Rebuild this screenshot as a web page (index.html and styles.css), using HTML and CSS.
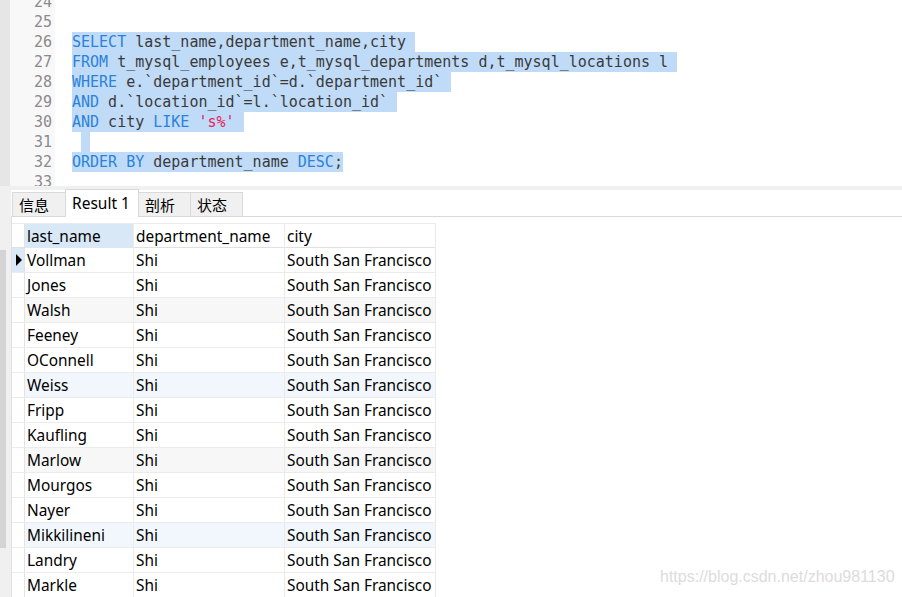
FILE: index.html
```html
<!DOCTYPE html>
<html>
<head>
<meta charset="utf-8">
<link rel="stylesheet" href="styles.css">
</head>
<body>
<div class="app">
  <div class="editor">
    <div class="edge"></div>
    <div class="gutter">
      <div class="nums">
        <div class="num">24</div>
        <div class="num">25</div>
        <div class="num">26</div>
        <div class="num">27</div>
        <div class="num">28</div>
        <div class="num">29</div>
        <div class="num">30</div>
        <div class="num">31</div>
        <div class="num">32</div>
        <div class="num">33</div>
      </div>
    </div>
    <div class="code">
      <div class="lines">
        <div class="ln"></div>
        <div class="ln"></div>
        <div class="ln"><span class="sel"><span class="kw">SELECT</span> last_name,department_name,city </span></div>
        <div class="ln"><span class="sel"><span class="kw">FROM</span> t_mysql_employees e,t_mysql_departments d,t_mysql_locations l </span></div>
        <div class="ln"><span class="sel"><span class="kw">WHERE</span> e.`department_id`=d.`department_id` </span></div>
        <div class="ln"><span class="sel"><span class="kw">AND</span> d.`location_id`=l.`location_id` </span></div>
        <div class="ln"><span class="sel"><span class="kw">AND</span> city <span class="kw">LIKE</span> <span class="str">'s%'</span> </span></div>
        <div class="ln"> <span class="sel"> </span></div>
        <div class="ln"><span class="sel"><span class="kw">ORDER BY</span> department_name <span class="kw">DESC</span>;</span></div>
        <div class="ln"></div>
      </div>
    </div>
  </div>
  <div class="splitter"></div>
  <div class="results">
    <div class="side">
      <div class="thumb"></div>
    </div>
    <div class="panel">
      <div class="tabs">
        <div class="tab">信息</div>
        <div class="tab active">Result 1</div>
        <div class="tab">剖析</div>
        <div class="tab">状态</div>
      </div>
      <div class="grid-wrap">
        <div class="grid">
          <div class="row head">
            <div class="ind"></div>
            <div class="cell c1 sorted">last_name</div>
            <div class="cell c2">department_name</div>
            <div class="cell c3">city</div>
          </div>
          <div class="row"><div class="ind cur"><span class="arrow"></span></div><div class="cell c1">Vollman</div><div class="cell c2">Shi</div><div class="cell c3">South San Francisco</div></div>
          <div class="row"><div class="ind"></div><div class="cell c1">Jones</div><div class="cell c2">Shi</div><div class="cell c3">South San Francisco</div></div>
          <div class="row gray"><div class="ind"></div><div class="cell c1">Walsh</div><div class="cell c2">Shi</div><div class="cell c3">South San Francisco</div></div>
          <div class="row"><div class="ind"></div><div class="cell c1">Feeney</div><div class="cell c2">Shi</div><div class="cell c3">South San Francisco</div></div>
          <div class="row"><div class="ind"></div><div class="cell c1">OConnell</div><div class="cell c2">Shi</div><div class="cell c3">South San Francisco</div></div>
          <div class="row blue"><div class="ind"></div><div class="cell c1">Weiss</div><div class="cell c2">Shi</div><div class="cell c3">South San Francisco</div></div>
          <div class="row"><div class="ind"></div><div class="cell c1">Fripp</div><div class="cell c2">Shi</div><div class="cell c3">South San Francisco</div></div>
          <div class="row"><div class="ind"></div><div class="cell c1">Kaufling</div><div class="cell c2">Shi</div><div class="cell c3">South San Francisco</div></div>
          <div class="row gray"><div class="ind"></div><div class="cell c1">Marlow</div><div class="cell c2">Shi</div><div class="cell c3">South San Francisco</div></div>
          <div class="row"><div class="ind"></div><div class="cell c1">Mourgos</div><div class="cell c2">Shi</div><div class="cell c3">South San Francisco</div></div>
          <div class="row"><div class="ind"></div><div class="cell c1">Nayer</div><div class="cell c2">Shi</div><div class="cell c3">South San Francisco</div></div>
          <div class="row blue"><div class="ind"></div><div class="cell c1">Mikkilineni</div><div class="cell c2">Shi</div><div class="cell c3">South San Francisco</div></div>
          <div class="row"><div class="ind"></div><div class="cell c1">Landry</div><div class="cell c2">Shi</div><div class="cell c3">South San Francisco</div></div>
          <div class="row"><div class="ind"></div><div class="cell c1">Markle</div><div class="cell c2">Shi</div><div class="cell c3">South San Francisco</div></div>
        </div>
      </div>
    </div>
  </div>
  <div class="watermark">https://blog.csdn.net/zhou981130</div>
</div>
</body>
</html>
```
FILE: styles.css
```css
html, body {
  margin: 0;
  padding: 0;
  background: #ffffff;
}
.app {
  position: relative;
  width: 902px;
  height: 597px;
  overflow: hidden;
  display: flex;
  flex-direction: column;
}
.editor {
  height: 186px;
  flex: none;
  display: flex;
  overflow: hidden;
  background: #ffffff;
}
.edge {
  width: 10px;
  background: #e6e6e6;
  flex: none;
}
.gutter {
  width: 45px;
  flex: none;
  background: #f8f8f8;
}
.nums, .lines {
  margin-top: -8px;
}
.num {
  height: 20px;
  line-height: 20px;
  text-align: right;
  padding-right: 3px;
  font-family: "DejaVu Sans Mono", monospace;
  font-size: 15px;
  color: #8a8a8a;
}
.code {
  flex: 1;
  padding-left: 17px;
}
.ln {
  height: 20px;
  line-height: 20px;
  white-space: pre;
  font-family: "DejaVu Sans Mono", monospace;
  font-size: 15px;
  color: #3a3a3a;
}
.sel {
  display: inline-block;
  height: 20px;
  background: #c0dbf7;
  vertical-align: top;
}
.kw {
  color: #2a82dc;
}
.str {
  color: #e5245c;
}
.splitter {
  height: 4px;
  flex: none;
  background: #f0f0f0;
}
.results {
  flex: 1;
  display: flex;
  min-height: 0;
}
.side {
  width: 11px;
  flex: none;
  background: #f0f0f0;
  display: flex;
  flex-direction: column;
}
.thumb {
  width: 6px;
  margin-top: 60px;
  height: 298px;
  background: #d4d4d4;
}
.panel {
  flex: 1;
  display: flex;
  flex-direction: column;
  min-width: 0;
}
.tabs {
  height: 26px;
  flex: none;
  display: flex;
  align-items: flex-end;
  border-bottom: 1px solid #d9d9d9;
  padding-left: 1px;
  font-size: 15px;
  color: #000;
}
.tab {
  height: 24px;
  line-height: 24px;
  box-sizing: border-box;
  border: 1px solid #d9d9d9;
  border-bottom: none;
  background: #f0f0f0;
  padding: 0 6px;
  margin-left: -1px;
  font-family: "Noto Sans CJK SC", sans-serif;
}
.tab:first-child {
  width: 54px;
  margin-left: 0;
}
.tab:nth-child(3), .tab:nth-child(4) {
  width: 53px;
}
.tab.active {
  height: 28px;
  line-height: 27px;
  margin-bottom: -1px;
  background: #ffffff;
  width: 74px;
  font-family: "Noto Sans", sans-serif;
  font-size: 15.5px;
  position: relative;
  z-index: 1;
}
.grid-wrap {
  flex: 1;
  padding-top: 6px;
  border-left: 1px solid #e0e0e0;
  background: #ffffff;
}
.grid {
  width: fit-content;
  font-family: "Noto Sans", "Noto Sans CJK SC", sans-serif;
  font-size: 15.4px;
  color: #000;
}
.row {
  display: flex;
  height: 25px;
  box-sizing: border-box;
  border-bottom: 1px solid #ebebeb;
}
.row.head {
  border-top: 1px solid #ebebeb;
  border-bottom: 1px solid #e0e0e0;
}
.row.gray .cell {
  background: #f7f7f7;
}
.row.blue .cell {
  background: #f2f7fd;
}
.ind {
  width: 12px;
  flex: none;
  border-right: 1px solid #e3e3e3;
  display: flex;
  align-items: center;
  justify-content: center;
}
.ind.cur {
  background: #dbe9f7;
}
.arrow {
  width: 0;
  height: 0;
  border-top: 6px solid transparent;
  border-bottom: 6px solid transparent;
  border-left: 6px solid #000;
  margin-left: 1px;
}
.cell {
  box-sizing: border-box;
  flex: none;
  height: 24px;
  line-height: 25px;
  padding-left: 2px;
  border-right: 1px solid #ebebeb;
  white-space: nowrap;
  overflow: hidden;
}
.c1 { width: 109px; }
.c2 { width: 151px; }
.c3 { width: 151px; }
.head .cell.sorted {
  background: #d9e8f7;
}
.watermark {
  position: absolute;
  left: 660px;
  top: 568px;
  font-family: "Liberation Sans", Arial, sans-serif;
  font-size: 16px;
  color: #dcdcdc;
  white-space: nowrap;
}
```
